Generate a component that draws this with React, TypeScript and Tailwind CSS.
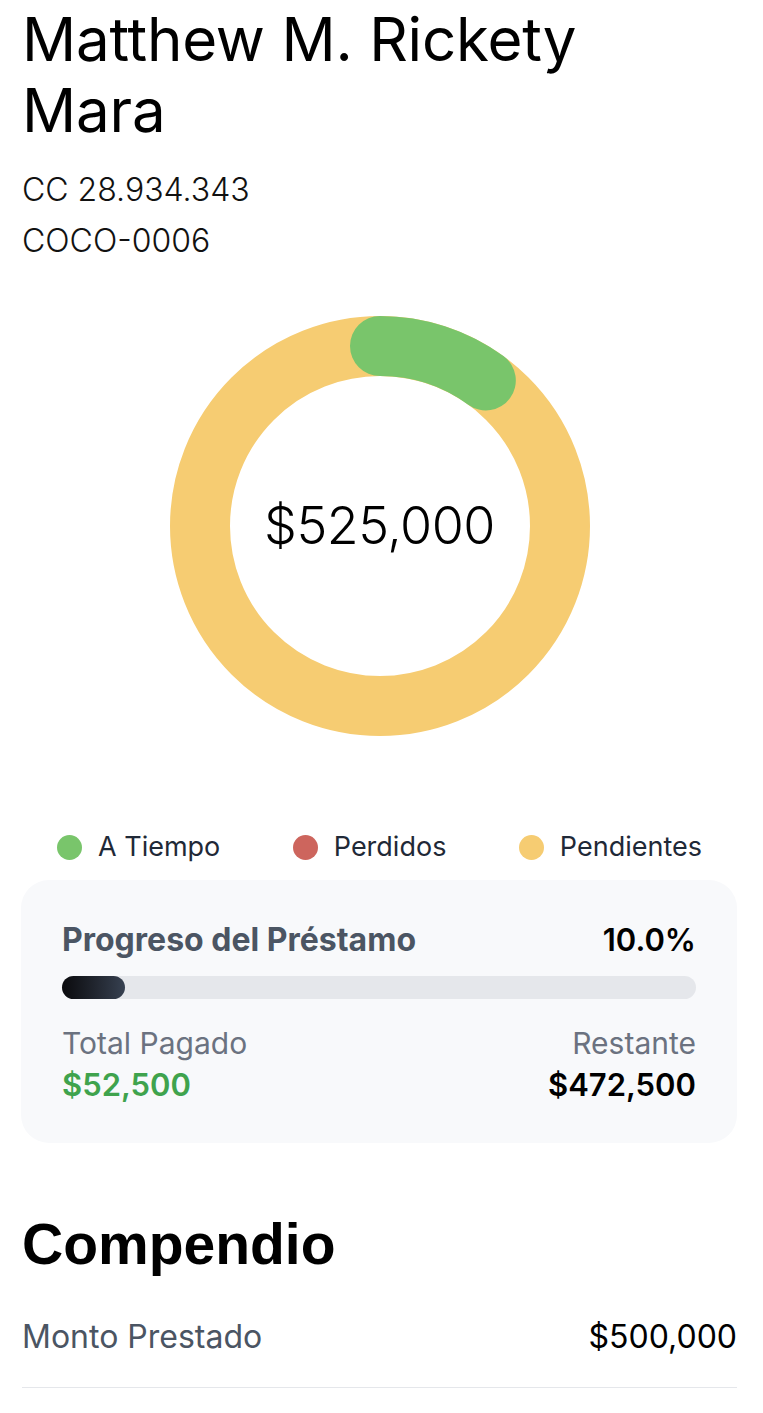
import { FC } from 'react';

const legend = [
  { label: 'A Tiempo', color: 'bg-[#79c56b]' },
  { label: 'Perdidos', color: 'bg-[#cd655d]' },
  { label: 'Pendientes', color: 'bg-[#f6cc72]' },
];

const Donut: FC<{ total: string; paid: number }> = ({ total, paid }) => {
  const r = 180;
  const c = 2 * Math.PI * r;
  return (
    <div className="relative mx-auto h-[420px] w-[420px]">
      <svg width="420" height="420" viewBox="0 0 420 420">
        <circle cx="210" cy="210" r={r} fill="none" stroke="#f6cc72" strokeWidth="60" />
        <circle
          cx="210"
          cy="210"
          r={r}
          fill="none"
          stroke="#79c56b"
          strokeWidth="60"
          strokeLinecap="round"
          strokeDasharray={`${c * paid} ${c}`}
          transform="rotate(-90 210 210)"
        />
      </svg>
      <div className="absolute inset-0 flex items-center justify-center">
        <span className="text-[52px] font-light tracking-[-0.5px] text-black">{total}</span>
      </div>
    </div>
  );
};

export default function App() {
  return (
    <div className="min-h-screen bg-white pl-[22px] pr-[26px] font-['Inter',sans-serif] text-black">
      <h1 className="max-w-[600px] pt-[4px] text-[60px] font-normal leading-[71px] tracking-[-0.2px]">
        Matthew M. Rickety Mara
      </h1>
      <div className="mt-[18px] text-[32px] font-light leading-[51px] text-[#111]">
        <p>CC 28.934.343</p>
        <p>COCO-0006</p>
      </div>

      <div className="mt-[50px]">
        <Donut total="$525,000" paid={0.1} />
      </div>

      <div className="mt-[91px] flex h-[40px] items-center justify-between px-[35px]">
        {legend.map((l) => (
          <div key={l.label} className="flex items-center gap-[16px]">
            <span className={`h-[25px] w-[25px] rounded-full ${l.color}`} />
            <span className="text-[27px] text-[#1f2937]">{l.label}</span>
          </div>
        ))}
      </div>

      <div className="-ml-px mt-[13px] rounded-[28px] bg-[#f8f9fb] px-[41px] pb-[36px] pt-[40px]">
        <div className="flex h-[40px] items-center justify-between">
          <span className="text-[32px] font-bold text-[#4b5563]">Progreso del Préstamo</span>
          <span className="text-[31px] font-semibold text-black">10.0%</span>
        </div>
        <div className="mt-[16px] h-[23px] w-full rounded-full bg-[#e5e7eb]">
          <div className="h-full w-[10%] rounded-full bg-gradient-to-r from-[#0b0b0e] to-[#374151]" />
        </div>
        <div className="mt-[24px] flex justify-between">
          <div>
            <p className="text-[30px] leading-[40px] text-[#6b7280]">Total Pagado</p>
            <p className="text-[31px] font-semibold leading-[44px] text-[#3fa34d]">$52,500</p>
          </div>
          <div className="text-right">
            <p className="text-[30px] leading-[40px] text-[#6b7280]">Restante</p>
            <p className="text-[31px] font-semibold leading-[44px] text-black">$472,500</p>
          </div>
        </div>
      </div>

      <h2 className="mt-[71px] font-['Liberation_Sans',sans-serif] text-[57px] font-bold leading-[60px]">
        Compendio
      </h2>
      <div className="mt-[43px] flex h-[71px] items-start justify-between border-b border-[#e5e7eb]">
        <span className="text-[32px] leading-[40px] text-[#4b5563]">Monto Prestado</span>
        <span className="text-[32px] leading-[40px] text-black">$500,000</span>
      </div>
    </div>
  );
}
